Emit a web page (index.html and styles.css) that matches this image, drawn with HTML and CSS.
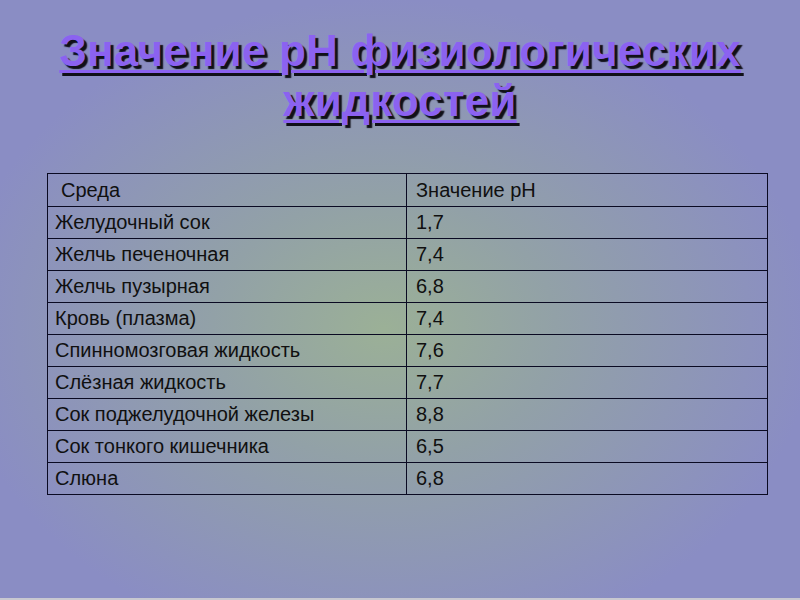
FILE: index.html
```html
<!DOCTYPE html>
<html lang="ru">
<head>
<meta charset="utf-8">
<title>Значение pH физиологических жидкостей</title>
<link rel="stylesheet" href="styles.css">
</head>
<body>
<div class="slide">
  <h1 class="title"><span>Значение рН физиологических</span><br><span>жидкостей</span></h1>
  <table class="ph">
    <colgroup><col class="col1"><col class="col2"></colgroup>
    <tr class="head"><td class="pad">Среда</td><td class="c2">Значение рН</td></tr>
    <tr><td>Желудочный сок</td><td class="c2">1,7</td></tr>
    <tr><td>Желчь печеночная</td><td class="c2">7,4</td></tr>
    <tr><td>Желчь пузырная</td><td class="c2">6,8</td></tr>
    <tr><td>Кровь (плазма)</td><td class="c2">7,4</td></tr>
    <tr><td>Спинномозговая жидкость</td><td class="c2">7,6</td></tr>
    <tr><td>Слёзная жидкость</td><td class="c2">7,7</td></tr>
    <tr><td>Сок поджелудочной железы</td><td class="c2">8,8</td></tr>
    <tr><td>Сок тонкого кишечника</td><td class="c2">6,5</td></tr>
    <tr><td>Слюна</td><td class="c2">6,8</td></tr>
  </table>
</div>
</body>
</html>
```
FILE: styles.css
```css
html, body {
  margin: 0;
  padding: 0;
}
.slide {
  width: 800px;
  height: 598px;
  border-bottom: 2px solid #c8c8d0;
  overflow: hidden;
  background:
    radial-gradient(ellipse 430px 330px at 48% 55%, rgba(156,178,148,0.95) 0%, rgba(148,166,160,0.8) 40%, rgba(138,142,196,0) 100%),
    #8a8dc4;
  display: flex;
  flex-direction: column;
  align-items: stretch;
}
.title {
  margin: 26px 0 0 0;
  font-family: "Liberation Sans", Arial, sans-serif;
  font-weight: bold;
  font-size: 44px;
  line-height: 50px;
  text-align: center;
  color: #8b62f0;
  text-shadow: 3px 3px 1px #101018;
  letter-spacing: 0.2px;
}
.title span {
  text-decoration: underline;
  text-decoration-thickness: 3px;
  text-underline-offset: 4px;
}
.ph {
  margin-top: 47px;
  margin-left: 47px;
  width: 721px;
  table-layout: fixed;
  border-collapse: collapse;
  font-family: "Liberation Sans", Arial, sans-serif;
  font-size: 20px;
  color: #101010;
}
.ph .col1 {
  width: 359px;
}
.ph td {
  border: 1px solid #0a0a22;
  height: 31px;
  padding: 0 7px;
  vertical-align: middle;
  white-space: nowrap;
}
.ph .head td {
  height: 32px;
}
.ph .c2 {
  padding-left: 9px;
}
.ph .pad {
  padding-left: 13px;
}
```
